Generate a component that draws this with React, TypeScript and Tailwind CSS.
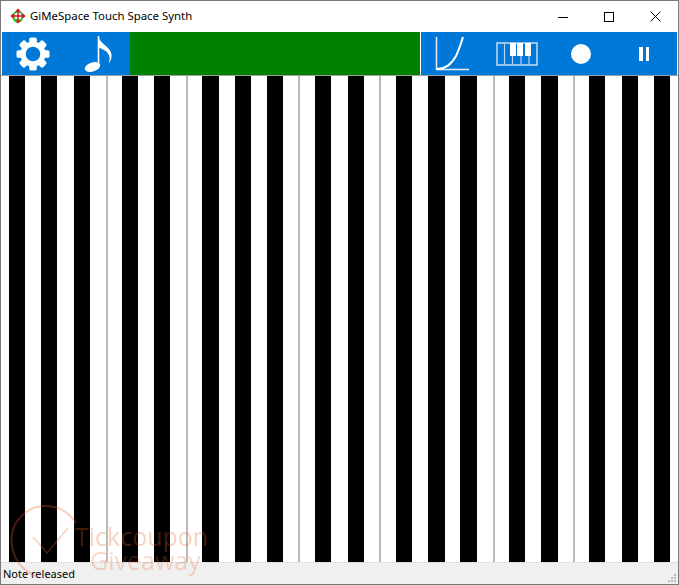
const blackKeys: [number, number][] = [
  [9, 25], [41, 57], [74, 90], [122, 138], [154, 170], [202, 219], [235, 251], [267, 283], [315, 331],
  [348, 364], [396, 412], [428, 445], [460, 477], [509, 525], [541, 558], [589, 605], [622, 638], [654, 670],
];

// white gaps that hold two keys get a grey divider in the middle
const dividers = [106, 186, 298, 379, 493, 573];

function Keyboard() {
  const parts: { kind: 'white' | 'black' | 'line'; width: number }[] = [];
  let x = 1;
  for (const [start, end] of blackKeys) {
    const line = dividers.find(d => d > x && d < start);
    if (line) {
      parts.push({ kind: 'white', width: line - x });
      parts.push({ kind: 'line', width: 2 });
      parts.push({ kind: 'white', width: start - line - 2 });
    } else {
      parts.push({ kind: 'white', width: start - x });
    }
    parts.push({ kind: 'black', width: end - start });
    x = end;
  }

  return (
    <div className="flex flex-1 min-h-0 bg-white">
      {parts.map((p, i) => (
        <div
          key={i}
          style={{ width: p.width }}
          className={p.kind === 'black' ? 'bg-black' : p.kind === 'line' ? 'bg-[#b9b9b9]' : 'bg-white'}
        />
      ))}
    </div>
  );
}

function AppIcon() {
  return (
    <svg width="16" height="16" viewBox="0 0 18 18" fill="none">
      <circle cx="9" cy="9" r="5" stroke="#2fae3a" strokeWidth="2" />
      <path d="M4 12.5 C6 15.5 10 16 13.5 13" stroke="#35e03a" strokeWidth="3" />
      <path d="M9 2v14M2 9h14" stroke="#c8141c" strokeWidth="1.6" />
      <path d="M9 0.5l3.4 3.4H5.6zM9 17.5l3.4-3.4H5.6zM0.5 9l3.4-3.4v6.8zM17.5 9l-3.4-3.4v6.8z" fill="#e0161e" />
    </svg>
  );
}

function WindowButtons() {
  return (
    <div className="flex items-center h-full">
      <div className="w-[46px] h-full flex items-center justify-center">
        <svg width="10" height="10" viewBox="0 0 10 10"><path d="M0 5.5h10" stroke="#000" /></svg>
      </div>
      <div className="w-[46px] h-full flex items-center justify-center">
        <svg width="10" height="10" viewBox="0 0 10 10"><rect x="0.5" y="0.5" width="9" height="9" fill="none" stroke="#000" /></svg>
      </div>
      <div className="w-[46px] h-full flex items-center justify-center">
        <svg width="11" height="11" viewBox="0 0 11 11"><path d="M0.5 0.5l10 10M10.5 0.5l-10 10" stroke="#000" /></svg>
      </div>
    </div>
  );
}

function Gear() {
  const teeth = [0, 45, 90, 135, 180, 225, 270, 315];
  return (
    <svg width="34" height="34" viewBox="0 0 36 36">
      {teeth.map(a => (
        <rect key={a} x="14" y="0.5" width="8" height="9" rx="2" fill="#fff" transform={`rotate(${a} 18 18)`} />
      ))}
      <circle cx="18" cy="18" r="10.5" fill="none" stroke="#fff" strokeWidth="5.6" />
    </svg>
  );
}

function Note() {
  return (
    <svg width="30" height="40" viewBox="0 0 30 40">
      <ellipse cx="10.5" cy="33" rx="8" ry="4.6" fill="#fff" transform="rotate(-18 10.5 33)" />
      <path d="M16.5 2v30" stroke="#fff" strokeWidth="1.6" fill="none" />
      <path d="M16 1.5c1 5 4.5 7.5 8 10.5 3.2 2.8 5.6 6 5.6 9.5 0 3.2-1.2 6-3 8 1.2-3 1.4-5.8.4-8.2-1.2-3-4-5.6-11-7.8z" fill="#fff" />
    </svg>
  );
}

function Curve() {
  return (
    <svg width="36" height="36" viewBox="0 0 36 36" fill="none">
      <path d="M2.5 1v32.5H35" stroke="#e4eefa" strokeWidth="1.5" />
      <path d="M3 33c8 0 14-4 19-13 3-6 5-13 7-19" stroke="#fff" strokeWidth="2" />
    </svg>
  );
}

function Piano() {
  return (
    <svg width="42" height="24" viewBox="0 0 42 24" fill="none">
      <rect x="1" y="1" width="40" height="22" stroke="#cfe3f7" strokeWidth="1.4" />
      <path d="M8.5 1v22M16.5 14v9M25 14v9M33 14v9" stroke="#b5d4f2" strokeWidth="1.2" />
      <rect x="14" y="1" width="6" height="13" fill="#fff" />
      <rect x="21" y="1" width="6" height="13" fill="#fff" />
      <rect x="29" y="1" width="6" height="13" fill="#fff" />
    </svg>
  );
}

function Watermark() {
  return (
    <div className="absolute left-[9px] top-[503px] w-[210px] h-[78px] pointer-events-none">
      <svg width="80" height="78" viewBox="0 0 80 78" fill="none" className="absolute left-0 top-0">
        <path d="M66 19C59 8 48 2 35 2 17 2 1.5 17 1.5 36c0 17 10 31 26 37" stroke="#e8602a" strokeOpacity="0.3" strokeWidth="2" />
        <path d="M23 33l14 16 21-25" stroke="#e8602a" strokeOpacity="0.3" strokeWidth="1.5" />
      </svg>
      <div className="absolute left-[65px] top-[21px] text-[25px] leading-[23px] text-[#e8602a]/30 whitespace-nowrap font-['Open_Sans',sans-serif] font-normal">
        Tickcoupon
      </div>
      <div className="absolute left-[80px] top-[45px] text-[25px] leading-[23px] text-[#e8602a]/25 whitespace-nowrap font-['Open_Sans',sans-serif] font-normal">
        Giveaway
      </div>
    </div>
  );
}

export default function App() {
  return (
    <div className="relative w-[679px] h-[585px] overflow-hidden border border-[#7a7a7a] flex flex-col bg-white font-['Noto_Sans',sans-serif]">
      <div className="h-[31px] shrink-0 flex items-center justify-between bg-white">
        <div className="flex items-center pl-[9px] gap-1 pb-px">
          <AppIcon />
          <span className="text-[11.4px] text-black whitespace-nowrap">GiMeSpace Touch Space Synth</span>
        </div>
        <WindowButtons />
      </div>

      <div className="h-[43px] shrink-0 flex px-px">
        <div className="w-[62px] bg-[#0078d7] flex items-center justify-center"><Gear /></div>
        <div className="w-[66px] bg-[#0078d7] flex items-center justify-center"><Note /></div>
        <div className="flex-1 bg-[#008000]" />
        <div className="w-px bg-white" />
        <div className="w-[62px] bg-[#0078d7] flex items-center justify-center"><Curve /></div>
        <div className="w-[67px] bg-[#0078d7] flex items-center justify-center"><Piano /></div>
        <div className="w-[61px] bg-[#0078d7] flex items-center justify-center">
          <div className="w-5 h-5 rounded-full bg-white" />
        </div>
        <div className="w-[66px] bg-[#0078d7] flex items-center justify-center gap-[3px]">
          <div className="w-[3.5px] h-[14px] bg-white" />
          <div className="w-[3.5px] h-[14px] bg-white" />
        </div>
      </div>
      <div className="h-px shrink-0 bg-[#a0a0a0]" />

      <Keyboard />

      <div className="h-[22px] shrink-0 bg-[#f0f0f0] flex items-center justify-between pl-[2px] pt-px border-t border-[#e0e0e0]">
        <span className="text-[11px] text-black">Note released</span>
        <svg width="10" height="10" viewBox="0 0 10 10" className="self-end mb-px mr-px">
          <path d="M7 1h2v2H7zM7 4h2v2H7zM4 4h2v2H4zM7 7h2v2H7zM4 7h2v2H4zM1 7h2v2H1z" fill="#b8b8b8" />
        </svg>
      </div>

      <Watermark />
    </div>
  );
}
